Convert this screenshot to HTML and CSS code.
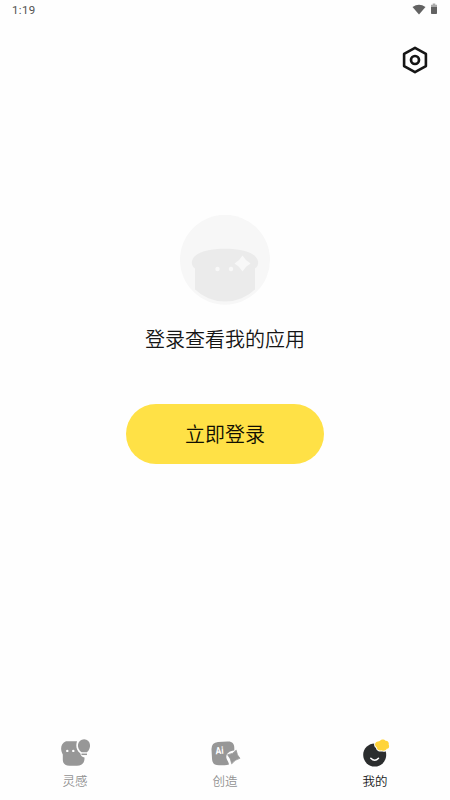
FILE: index.html
```html
<!DOCTYPE html>
<html lang="zh-CN">
<head>
<meta charset="utf-8">
<title>我的</title>
<link rel="stylesheet" href="styles.css">
</head>
<body>
<div class="screen">
  <div class="status">
    <span class="time">1:19</span>
    <svg class="signals" width="28" height="14" viewBox="0 0 28 14">
      <path fill="#626262" d="M1.500 4.100Q8-.8 14.500 4.100L8 11.600Z"/>
      <path fill="#aaa" d="M21.700 .5h2.600v1.200h1.700v3h-6v-3h1.700z"/>
      <path fill="#626262" d="M20 4.100h6v6.100q0 .8-.8.8h-4.400q-.8 0-.8-.8z"/>
    </svg>
  </div>
  <header class="header">
    <button class="settings" aria-label="设置">
      <svg width="40" height="40" viewBox="0 0 40 40" fill="none" stroke="#151515" stroke-linejoin="round">
        <path stroke-width="2.600" d="M20 7.900L30.900 13.900V26.100L20 32.200L9.100 26.100V13.900Z"/>
        <circle cx="20" cy="20" r="4" stroke-width="2.700"/>
      </svg>
    </button>
  </header>
  <main class="content">
    <svg class="avatar" width="90" height="90" viewBox="0 0 90 90">
      <defs><clipPath id="rim"><circle cx="45" cy="43" r="43.500"/></clipPath></defs>
      <circle cx="45" cy="44.700" r="45" fill="#f7f7f7"/>
      <path clip-path="url(#rim)" fill="#ebebeb" d="M15 53.500C12 51.500 11.500 49 12 46C14 37.500 28 33.700 45 33.700S76 37.500 78 46C78.500 49 78 51.500 75 53.500V90H15Z"/>
      <circle cx="37.500" cy="54" r="2.200" fill="#f8f8f8"/>
      <circle cx="51" cy="54" r="2.200" fill="#f8f8f8"/>
      <path fill="#f8f8f8" d="M62.500 40.500Q65.500 45.700 70.500 48.500Q65.500 51.300 62.500 56.500Q59.500 51.300 54.500 48.500Q59.500 45.700 62.500 40.500Z"/>
    </svg>
    <p class="hint">登录查看我的应用</p>
    <button class="login">立即登录</button>
  </main>
  <nav class="tabs">
    <div class="tab">
      <svg width="50" height="40" viewBox="0 0 50 40">
        <path fill="#979797" d="M16 11.200H27C25.500 16 26.300 20.500 30.300 23.200Q31 27 34.500 27.500C34.800 33 32 35.700 27 35.700H19.500C15 35.700 12.800 33.500 12.800 29.500V24.500C10 20 10.500 13 16 11.200Z"/>
        <circle cx="17.300" cy="20.900" r="1.200" fill="#fff"/>
        <circle cx="23.300" cy="20.900" r="1.200" fill="#fff"/>
        <path fill="#979797" d="M31.500 22.200C25.500 18 27.500 9.300 34.100 9.300S42 18 37 22.200Z"/>
        <path stroke="#979797" stroke-width="1.500" d="M31.500 24.300H37"/>
      </svg>
      <span>灵感</span>
    </div>
    <div class="tab">
      <svg width="50" height="40" viewBox="0 0 50 40">
        <path fill="#979797" d="M18 12L27.500 11.500C32.500 11.300 34.300 14 34.300 18V20.500C29 21 26 23.800 26.300 27.500C26.500 30 28.500 31 29 34.500Q27 35.200 24.500 35.200H19C14 35.200 12.200 33 12 28.500L11.500 19.500Q11.300 12.500 18 12Z"/>
        <text class="ai" transform="translate(15.700 24.200) rotate(-4) scale(.85 1)">Ai</text>
        <path fill="#979797" stroke="#979797" stroke-width=".8" stroke-linejoin="round" d="M36.200 20.200Q36.800 25.300 39.900 28.300Q35 29.500 31.700 33.800Q31 28.500 27.600 24.700Q33 24.300 36.200 20.200Z"/>
      </svg>
      <span>创造</span>
    </div>
    <div class="tab active">
      <svg width="50" height="40" viewBox="0 0 50 40">
        <circle cx="24.700" cy="25" r="11.500" fill="#2b2d2e"/>
        <path fill="none" stroke="#fff" stroke-width="1.500" stroke-linecap="round" d="M20.800 28.200Q24.700 32.200 28.500 28.200"/>
        <path fill="#ffd43a" stroke="#fff" stroke-width="2" paint-order="stroke" d="M26.800 17.500C24.700 16.300 24.500 13.500 26 12.300C27.300 11 28.700 11.600 30 10.700C31.500 8.900 34.500 9.100 35.500 10.800C38 10.700 39.300 12.800 38.700 14.700C39.900 17 38.500 18.900 36.600 18.800C36 20.900 33.300 21.300 31.800 20.200C29.500 21 26.900 19.800 26.800 17.500Z"/>
      </svg>
      <span>我的</span>
    </div>
  </nav>
</div>
</body>
</html>
```
FILE: styles.css
```css
* { box-sizing: border-box; }
body {
  margin: 0;
  background: #fff;
  font-family: "Noto Sans", "Noto Sans CJK SC", sans-serif;
}
.screen {
  width: 450px;
  height: 800px;
  display: flex;
  flex-direction: column;
  background: #fefefe;
}
.status {
  height: 20px;
  padding: 0 11px 0 12px;
  display: flex;
  justify-content: space-between;
  align-items: center;
}
.time {
  font: 400 11.5px/20px Roboto, sans-serif;
  letter-spacing: 0.35px;
  color: #505050;
}
.signals { margin-top: -1px; }
.header {
  height: 80px;
  padding: 20px 15px;
  display: flex;
  justify-content: flex-end;
}
button {
  border: 0;
  padding: 0;
  background: none;
  font-family: "Noto Sans CJK SC", sans-serif;
}
.settings { width: 40px; height: 40px; }
.settings svg { display: block; }
.content {
  flex: 1;
  padding-top: 115px;
  display: flex;
  flex-direction: column;
  align-items: center;
}
.hint {
  margin: 18px 0 50px;
  height: 31px;
  font: 350 20px/31px "Noto Sans CJK SC", sans-serif;
  color: #151515;
}
.login {
  width: 198px;
  height: 60px;
  border-radius: 30px;
  background: #ffe146;
  font-size: 20px;
  font-weight: 350;
  line-height: 60px;
  color: #100e02;
}
.tabs {
  height: 70px;
  display: grid;
  grid-template-columns: repeat(3, 1fr);
}
.tab {
  display: flex;
  flex-direction: column;
  align-items: center;
  font: 350 12.5px/22px "Noto Sans CJK SC", sans-serif;
  color: #929292;
}
.tab.active { color: #181818; }
.ai {
  font: 700 10px Roboto, sans-serif;
  fill: #fff;
}
```
